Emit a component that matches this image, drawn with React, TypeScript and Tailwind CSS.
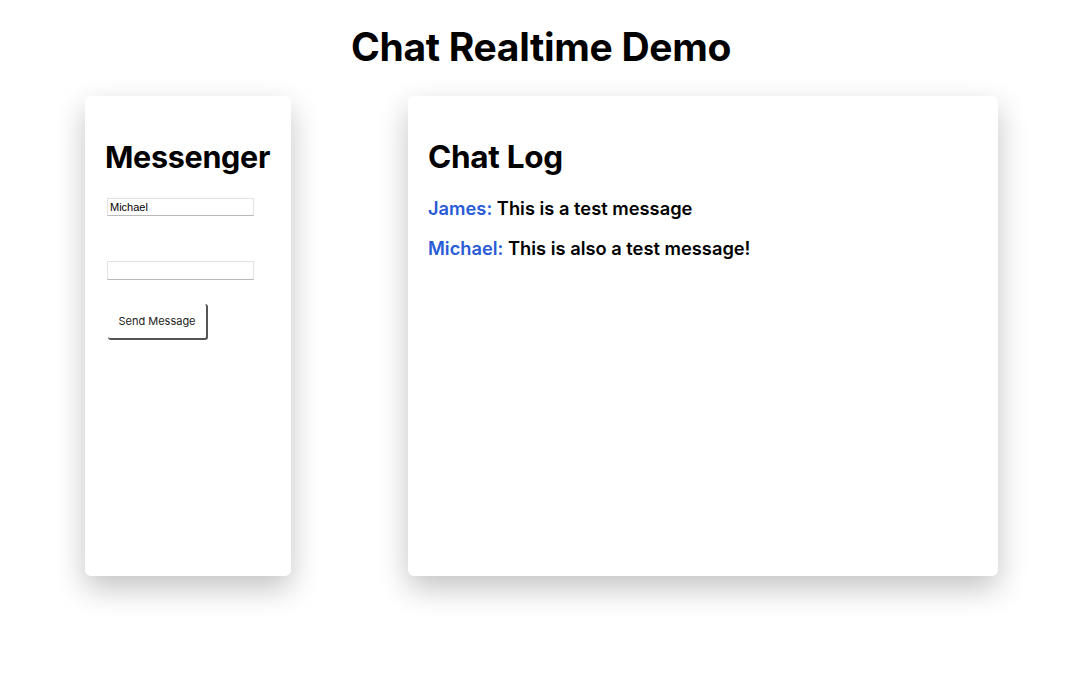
export default function App() {
  const messages = [
    { id: 1, name: "James", text: "This is a test message" },
    { id: 2, name: "Michael", text: "This is also a test message!" },
  ];

  return (
    <div className="min-h-screen bg-white font-['Inter',sans-serif] text-black">
      {/* Title */}
      <h1 className="pt-[24px] pl-[13px] text-center text-[39px] leading-[46px] font-bold tracking-[-0.3px]">
        Chat Realtime Demo
      </h1>

      <div className="flex pt-[26px] pl-[85px]">
        {/* Messenger panel */}
        <div className="w-[206px] h-[480px] rounded-md bg-white px-[20px] shadow-[0_12px_30px_rgba(0,0,0,0.24)]">
          <h2 className="mt-[42px] text-[30.5px] leading-[38px] font-bold tracking-[-0.3px]">Messenger</h2>
          <input
            defaultValue="Michael"
            className="mt-[22px] ml-[2px] block w-[147px] h-[18px] border border-[#e2e2e2] border-b-[#b9b9b9] px-[2px] text-[11px] font-['Liberation_Sans',sans-serif] outline-none"
          />
          <input className="mt-[45px] ml-[2px] block w-[147px] h-[19px] border border-[#e2e2e2] border-b-[#b9b9b9] px-[2px] text-[11px] outline-none" />
          <button className="mt-[24px] ml-[3px] w-[100px] h-[36px] rounded-[3px] border-r-2 border-b-2 border-[#555] bg-white text-[11px] text-[#222]">
            Send Message
          </button>
        </div>

        {/* Chat log panel */}
        <div className="ml-[117px] w-[590px] h-[480px] rounded-md bg-white px-[20px] shadow-[0_12px_30px_rgba(0,0,0,0.24)]">
          <h2 className="mt-[42px] text-[31.5px] leading-[38px] font-bold tracking-[-0.3px]">Chat Log</h2>
          <div className="mt-[21px] flex flex-col gap-[18px]">
            {messages.map((m) => (
              <p key={m.id} className="text-[18.3px] leading-[22px] font-semibold">
                <span className="text-[#2a5bd7]">{m.name}:</span> {m.text}
              </p>
            ))}
          </div>
        </div>
      </div>
    </div>
  );
}
